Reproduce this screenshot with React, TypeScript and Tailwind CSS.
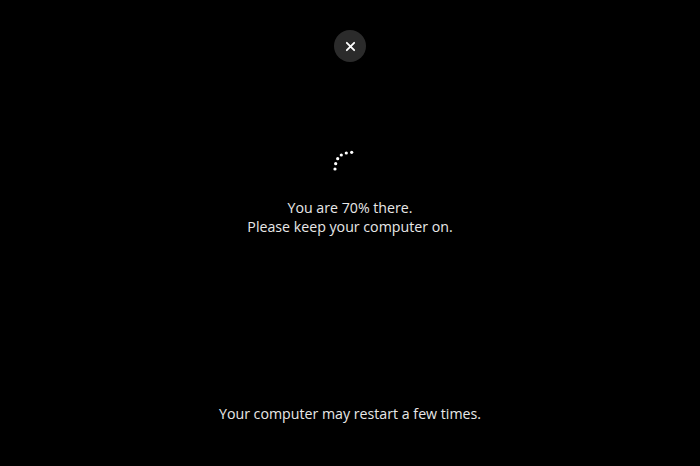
import React from "react";

const dots = [
  [335, 169],
  [335.7, 163.7],
  [337.7, 158.7],
  [341.3, 155],
  [346.3, 153],
  [351.7, 152.3],
];

export default function App() {
  return (
    <div
      className="w-[700px] h-[466px] bg-black flex flex-col items-center text-[#e8e8e8]"
      style={{ fontFamily: '"Open Sans", "DejaVu Sans", sans-serif' }}
    >
      <button className="mt-[30px] w-[32px] h-[32px] rounded-full bg-[#2b2b2b] flex items-center justify-center">
        <svg width="11" height="11" viewBox="0 0 12 12">
          <path d="M2 2L10 10M10 2L2 10" stroke="#ffffff" strokeWidth="2" strokeLinecap="round" />
        </svg>
      </button>
      <svg className="mt-[86px]" width="40" height="40" viewBox="330 148 40 40">
        {dots.map(([x, y], i) => (
          <circle key={i} cx={x} cy={y} r="1.6" fill="#ffffff" />
        ))}
      </svg>
      <div className="mt-[10px] text-[14.2px] leading-[19px] text-center">
        <div>You are 70% there.</div>
        <div>Please keep your computer on.</div>
      </div>
      <div className="mt-auto mb-[43px] text-[14.2px] leading-[19px]">
        Your computer may restart a few times.
      </div>
    </div>
  );
}
